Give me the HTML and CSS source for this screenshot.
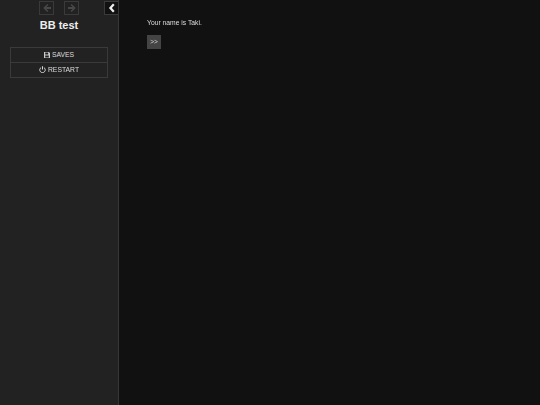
FILE: index.html
```html
<!DOCTYPE html>
<html lang="en">
<head>
<meta charset="utf-8">
<title>BB test</title>
<link rel="stylesheet" href="styles.css">
</head>
<body>
<div class="app">
  <aside class="sidebar">
    <div class="topbar">
      <div class="history">
        <button class="nav-btn" aria-label="Back"><svg viewBox="0 0 10 10" width="10" height="10"><path d="M5.4 1 1.2 5l4.2 4 1-1-2-2H9V4H4.4l2-2z"/></svg></button>
        <button class="nav-btn" aria-label="Forward"><svg viewBox="0 0 10 10" width="10" height="10"><path d="M4.6 1 8.8 5 4.6 9l-1-1 2-2H1V4h4.6l-2-2z"/></svg></button>
      </div>
      <button class="stow" aria-label="Collapse"><svg viewBox="0 0 10 10" width="10" height="10"><path d="M6.8 1.2 3.4 5l3.4 3.8" fill="none" stroke="#eee" stroke-width="2.2"/></svg></button>
    </div>
    <h1 class="title">BB test</h1>
    <nav class="menu">
      <button class="menu-item"><svg class="menu-icon" viewBox="0 0 10 10" width="6" height="6"><path fill-rule="evenodd" d="M0 0h8.2L10 1.8V10H0zM2 1v3h5V1zM2 6v3h6V6z"/></svg>SAVES</button>
      <button class="menu-item"><svg class="menu-icon" viewBox="0 0 10 10" width="7" height="7"><path d="M3 2.2a3.9 3.9 0 1 0 4 0M5 .4v4.6" fill="none" stroke="#ddd" stroke-width="1.4"/></svg>RESTART</button>
    </nav>
  </aside>
  <main class="story">
    <p class="line">Your name is Taki.</p>
    <button class="next">&gt;&gt;</button>
  </main>
</div>
</body>
</html>
```
FILE: styles.css
```css
* { box-sizing: border-box; }
html, body { margin: 0; height: 100%; background: #111; }
body { font-family: "Liberation Sans", Arial, sans-serif; color: #ddd; font-size: 6.7px; overflow: hidden; }
button { font-family: inherit; padding: 0; margin: 0; cursor: pointer; }
.app { display: flex; height: 405px; filter: blur(0.4px); }
.sidebar { width: 119px; flex: none; background: #222; border-right: 1px solid #363636; padding: 0 0 0 10px; }
.topbar { display: flex; height: 16px; padding-top: 1px; }
.history { display: flex; gap: 10px; margin-left: 29px; margin-right: 25px; }
.nav-btn { width: 15px; height: 14px; background: transparent; border: 1px solid #3a3a3a; display: flex; align-items: center; justify-content: center; }
.nav-btn svg { fill: #484848; }
.stow { width: 15px; height: 14px; background: #111; border: 1px solid #3a3a3a; border-right: 0; display: flex; align-items: center; justify-content: center; }
.title { margin: 2px 0 0; width: 98px; text-align: center; font-size: 11px; line-height: 14px; font-weight: bold; color: #eee; }
.menu { margin-top: 15px; width: 98px; border: 1px solid #3a3a3a; display: flex; flex-direction: column; }
.menu-item { height: 14px; background: transparent; border: 0; color: #ddd; font-size: 6.8px; line-height: 12px; padding-bottom: 1px; display: flex; align-items: center; justify-content: center; gap: 2px; }
.menu-item + .menu-item { height: 15px; border-top: 1px solid #3a3a3a; }
.menu-icon { fill: #ccc; flex: none; }
.story { flex: 1; padding: 18px 0 0 28px; }
.line { margin: 0; font-size: 6.75px; line-height: 9px; color: #ddd; }
.next { display: block; margin-top: 8px; width: 14px; height: 14px; background: #444; border: 0; color: #ddd; font-size: 6.5px; line-height: 12px; }
```
